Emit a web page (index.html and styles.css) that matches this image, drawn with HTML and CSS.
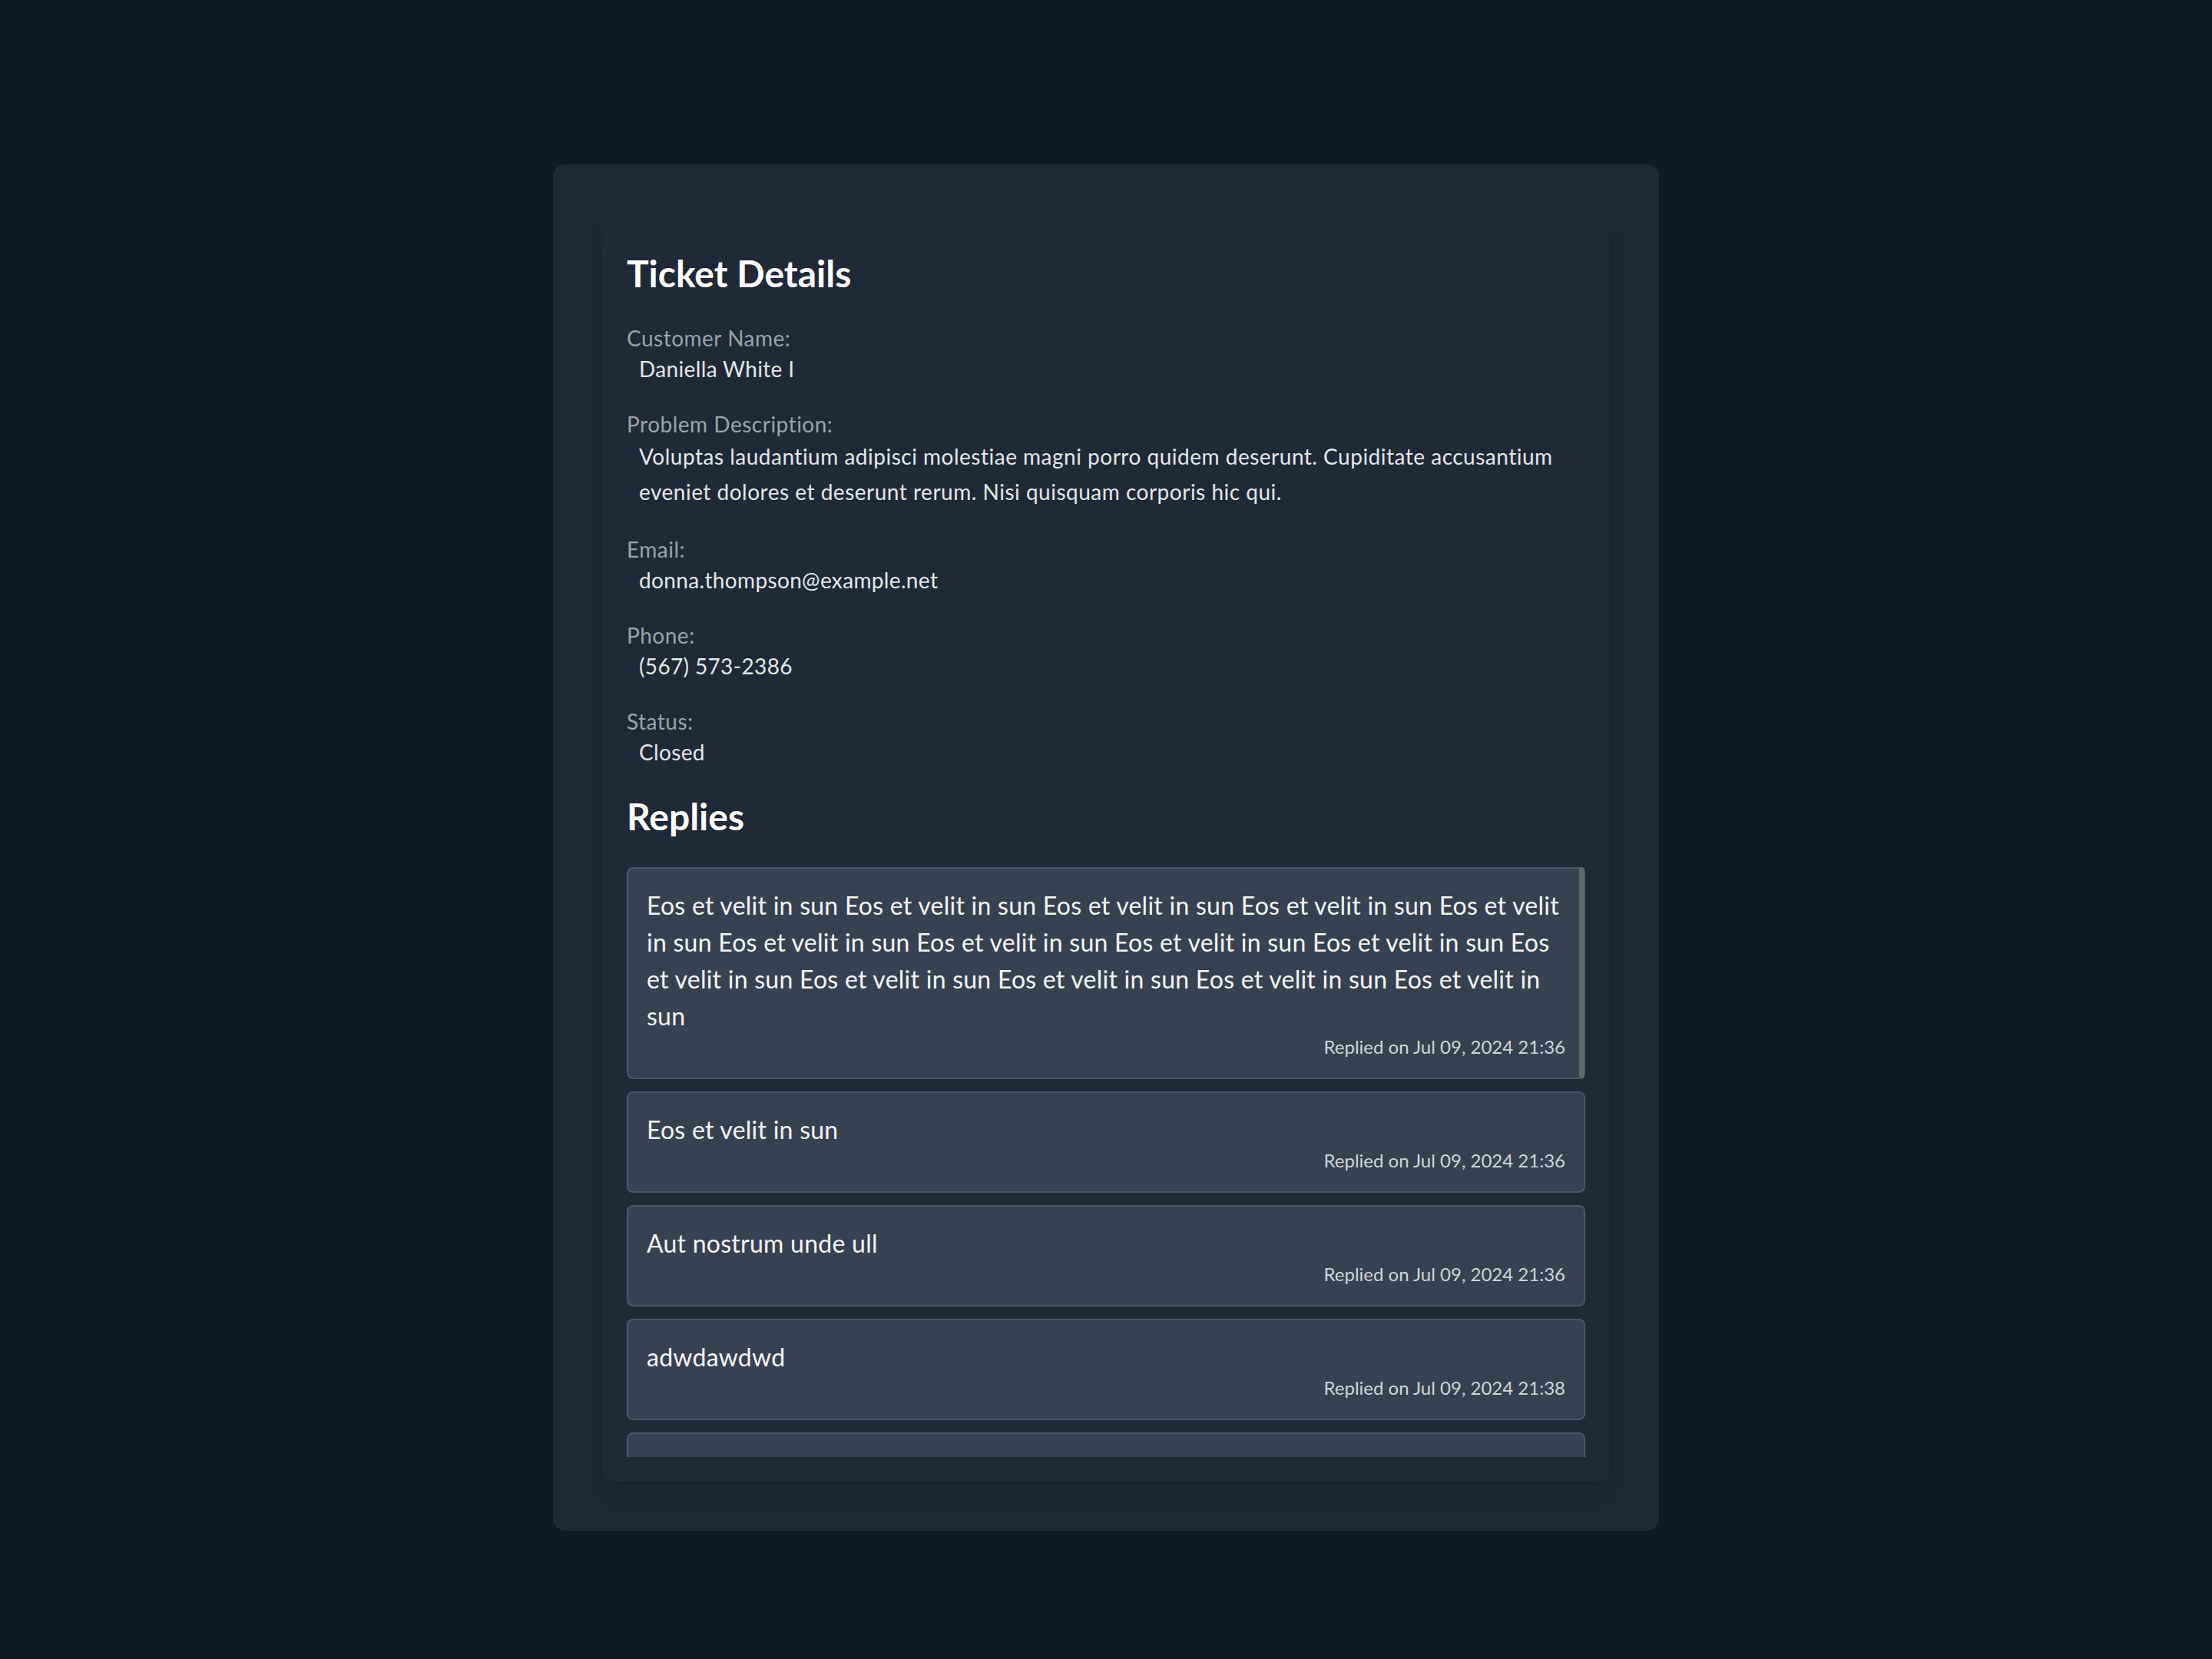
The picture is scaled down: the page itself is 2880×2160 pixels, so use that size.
FILE: index.html
```html
<!DOCTYPE html>
<html lang="en">
<head>
<meta charset="utf-8">
<title>Ticket Details</title>
<link rel="stylesheet" href="styles.css">
</head>
<body>
<main class="page">
  <section class="card">
    <div class="panel">
      <h1 class="title">Ticket Details</h1>

      <div class="field">
        <div class="label">Customer Name:</div>
        <p class="value">Daniella White I</p>
      </div>

      <div class="field">
        <div class="label">Problem Description:</div>
        <p class="value value-long">Voluptas laudantium adipisci molestiae magni porro quidem deserunt. Cupiditate accusantium eveniet dolores et deserunt rerum. Nisi quisquam corporis hic qui.</p>
      </div>

      <div class="field">
        <div class="label">Email:</div>
        <p class="value">donna.thompson@example.net</p>
      </div>

      <div class="field">
        <div class="label">Phone:</div>
        <p class="value">(567) 573-2386</p>
      </div>

      <div class="field">
        <div class="label">Status:</div>
        <p class="value">Closed</p>
      </div>

      <h2 class="subtitle">Replies</h2>

      <div class="replies-wrap">
        <div class="replies">
          <div class="reply">
            <p class="reply-text">Eos et velit in sun Eos et velit in sun Eos et velit in sun Eos et velit in sun Eos et velit in sun Eos et velit in sun Eos et velit in sun Eos et velit in sun Eos et velit in sun Eos et velit in sun Eos et velit in sun Eos et velit in sun Eos et velit in sun Eos et velit in sun</p>
            <p class="reply-date">Replied on Jul 09, 2024 21:36</p>
          </div>
          <div class="reply">
            <p class="reply-text">Eos et velit in sun</p>
            <p class="reply-date">Replied on Jul 09, 2024 21:36</p>
          </div>
          <div class="reply">
            <p class="reply-text">Aut nostrum unde ull</p>
            <p class="reply-date">Replied on Jul 09, 2024 21:36</p>
          </div>
          <div class="reply">
            <p class="reply-text">adwdawdwd</p>
            <p class="reply-date">Replied on Jul 09, 2024 21:38</p>
          </div>
          <div class="reply">
            <p class="reply-text">dawdawdawd</p>
            <p class="reply-date">Replied on Jul 09, 2024 21:38</p>
          </div>
          <div class="reply">
            <p class="reply-text">awdawdawd</p>
            <p class="reply-date">Replied on Jul 09, 2024 21:39</p>
          </div>
        </div>
        <div class="scroll-thumb"></div>
      </div>
    </div>
  </section>
</main>
</body>
</html>
```

FILE: styles.css
```css
* { box-sizing: border-box; }

html, body {
  margin: 0;
  padding: 0;
  background: #111827;
}

body {
  font-family: Lato, "Open Sans", "Liberation Sans", sans-serif;
  color: #e5e7eb;
  min-height: 2160px;
}

.page {
  padding-top: 214px;
}

.card {
  width: 1440px;
  margin: 0 auto;
  padding: 64px;
  background: #1f2937;
  border-radius: 16px;
}

.panel {
  background: #1f2937;
  border-radius: 16px;
  padding: 32px;
  box-shadow: 0 20px 30px -6px rgba(0, 0, 0, 0.14), 0 8px 12px -8px rgba(0, 0, 0, 0.14);
}

.title {
  margin: 14px 0 32px;
  font-size: 48px;
  line-height: 64px;
  font-weight: 700;
  color: #ffffff;
}

.field {
  margin-bottom: 32px;
}

.label {
  font-size: 28px;
  line-height: 40px;
  letter-spacing: 0.5px;
  color: #9ca3af;
}

.value {
  margin: 0 0 0 16px;
  font-size: 28px;
  line-height: 40px;
  letter-spacing: 0.35px;
  color: #e5e7eb;
}

.value-long {
  line-height: 45.5px;
  letter-spacing: 0.5px;
}

.subtitle {
  margin: 6px 0 34px;
  font-size: 48px;
  line-height: 64px;
  font-weight: 700;
  color: #ffffff;
}

.replies-wrap {
  position: relative;
}

.replies {
  max-height: 768px;
  overflow: hidden;
  display: flex;
  flex-direction: column;
  gap: 16px;
}

.reply {
  flex: none;
  background: #374151;
  border: 2px solid #4b5563;
  border-radius: 8px;
  padding: 24px;
}

.reply-text {
  margin: 0;
  font-size: 32px;
  line-height: 48px;
  letter-spacing: 0.25px;
  color: #f5f6f8;
}

.reply-date {
  margin: 0;
  text-align: right;
  font-size: 24px;
  line-height: 32px;
  color: #d1d5db;
}

.scroll-thumb {
  position: absolute;
  top: 0;
  right: 1px;
  width: 7px;
  height: 275px;
  border-radius: 4px;
  background: #62666d;
}
```
